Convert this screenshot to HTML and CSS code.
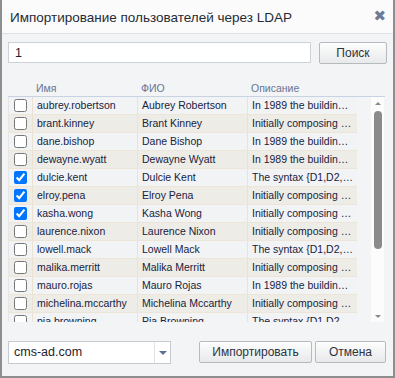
FILE: index.html
```html
<!DOCTYPE html>
<html lang="ru">
<head>
<meta charset="utf-8">
<title>Импорт LDAP</title>
<link rel="stylesheet" href="styles.css">
</head>
<body>
<div class="dialog">
  <div class="titlebar">
    <span class="title">Импортирование пользователей через LDAP</span>
    <span class="close">✖</span>
  </div>
  <div class="content">
    <div class="search">
      <input class="search-input" type="text" value="1">
      <button class="btn btn-search">Поиск</button>
    </div>
    <div class="grid">
      <div class="grid-head">
        <div class="hcell c-check"></div>
        <div class="hcell c-name">Имя</div>
        <div class="hcell c-fio">ФИО</div>
        <div class="hcell c-desc">Описание</div>
      </div>
      <div class="grid-body">
        <div class="rows">
          <table class="table">
            <colgroup><col class="w-check"><col class="w-name"><col class="w-fio"><col class="w-desc"></colgroup>
            <tbody>
              <tr><td class="cb"><input type="checkbox"></td><td>aubrey.robertson</td><td>Aubrey Robertson</td><td>In 1989 the building was restored</td></tr>
              <tr><td class="cb"><input type="checkbox"></td><td>brant.kinney</td><td>Brant Kinney</td><td>Initially composing light-hearted</td></tr>
              <tr><td class="cb"><input type="checkbox"></td><td>dane.bishop</td><td>Dane Bishop</td><td>In 1989 the building was restored</td></tr>
              <tr><td class="cb"><input type="checkbox"></td><td>dewayne.wyatt</td><td>Dewayne Wyatt</td><td>In 1989 the building was restored</td></tr>
              <tr><td class="cb"><input type="checkbox" checked></td><td>dulcie.kent</td><td>Dulcie Kent</td><td>The syntax {D1,D2,D3} denotes</td></tr>
              <tr><td class="cb"><input type="checkbox" checked></td><td>elroy.pena</td><td>Elroy Pena</td><td>Initially composing light-hearted</td></tr>
              <tr><td class="cb"><input type="checkbox" checked></td><td>kasha.wong</td><td>Kasha Wong</td><td>Initially composing light-hearted</td></tr>
              <tr><td class="cb"><input type="checkbox"></td><td>laurence.nixon</td><td>Laurence Nixon</td><td>Initially composing light-hearted</td></tr>
              <tr><td class="cb"><input type="checkbox"></td><td>lowell.mack</td><td>Lowell Mack</td><td>The syntax {D1,D2,D3} denotes</td></tr>
              <tr><td class="cb"><input type="checkbox"></td><td>malika.merritt</td><td>Malika Merritt</td><td>Initially composing light-hearted</td></tr>
              <tr><td class="cb"><input type="checkbox"></td><td>mauro.rojas</td><td>Mauro Rojas</td><td>In 1989 the building was restored</td></tr>
              <tr><td class="cb"><input type="checkbox"></td><td>michelina.mccarthy</td><td>Michelina Mccarthy</td><td>Initially composing light-hearted</td></tr>
              <tr><td class="cb"><input type="checkbox"></td><td>pia.browning</td><td>Pia Browning</td><td>The syntax {D1,D2,D3} denotes</td></tr>
            </tbody>
          </table>
        </div>
        <div class="scrollbar">
          <span class="arrow arrow-up"></span>
          <span class="thumb"></span>
          <span class="arrow arrow-down"></span>
        </div>
      </div>
    </div>
    <div class="footer">
      <div class="select">
        <span class="select-value">cms-ad.com</span>
        <span class="select-toggle"><span class="tri"></span></span>
      </div>
      <div class="actions">
        <button class="btn btn-import">Импортировать</button>
        <button class="btn btn-cancel">Отмена</button>
      </div>
    </div>
  </div>
</div>
</body>
</html>
```
FILE: styles.css
```css
html, body {
  margin: 0;
  padding: 0;
  background: #ffffff;
}
body {
  font-family: "Liberation Sans", Arial, sans-serif;
}
.dialog {
  width: 395px;
  height: 378px;
  box-sizing: border-box;
  border: 2px solid #8e8e8e;
  border-top: 0;
  background: #f3f4f6;
  display: flex;
  flex-direction: column;
}
.titlebar {
  flex: none;
  height: 33px;
  background: #fbfbfc;
  border-bottom: 1px solid #dce1e9;
  display: flex;
  align-items: center;
  justify-content: space-between;
  padding: 0 7px 0 8px;
}
.title {
  font-size: 13.5px;
  color: #262b36;
  padding-top: 2px;
}
.close {
  color: #6a7a97;
  font-size: 15px;
  line-height: 1;
  font-family: "DejaVu Sans", sans-serif;
}
.content {
  flex: 1;
  display: flex;
  flex-direction: column;
  padding: 8px 6px 0 6px;
  min-height: 0;
}
.search {
  display: flex;
  align-items: flex-start;
  gap: 8px;
}
.search-input {
  width: 303px;
  height: 21px;
  box-sizing: border-box;
  border: 1px solid #cdd2d9;
  background: #ffffff;
  padding: 0 6px;
  margin: 0;
  font-family: "Liberation Sans", Arial, sans-serif;
  font-size: 12.5px;
  color: #1c2030;
  outline: none;
}
.btn {
  box-sizing: border-box;
  height: 22px;
  margin: 0;
  padding: 0;
  border: 1px solid #b6babf;
  border-radius: 2px;
  background: linear-gradient(#fdfdfd, #e8e9eb);
  font-family: "Liberation Sans", Arial, sans-serif;
  font-size: 12px;
  color: #2d3340;
  box-shadow: inset 0 1px 0 #ffffff;
}
.btn-search {
  width: 68px;
}
.grid {
  margin-top: 13px;
  width: 377px;
}
.grid-head {
  display: flex;
  height: 20px;
  border-bottom: 1px solid #c7d2e3;
  align-items: flex-end;
  padding-bottom: 2px;
  box-sizing: border-box;
}
.hcell {
  font-size: 10.5px;
  line-height: 12px;
  color: #667594;
  box-sizing: border-box;
  padding-left: 4px;
}
.c-check { width: 24px; padding: 0; }
.c-name { width: 105px; }
.c-fio { width: 110px; }
.c-desc { width: 110px; }
.grid-body {
  display: flex;
  height: 225px;
  overflow: hidden;
}
.rows {
  width: 349px;
  overflow: hidden;
}
.table {
  width: 349px;
  table-layout: fixed;
  border-collapse: collapse;
  font-size: 10.5px;
  color: #17223f;
}
.w-check { width: 24px; }
.w-name { width: 105px; }
.w-fio { width: 110px; }
.w-desc { width: 110px; }
.table td {
  height: 17px;
  padding: 0 4px;
  box-sizing: border-box;
  border-left: 1px solid #ebe2d2;
  border-bottom: 1px solid #ece5d8;
  white-space: nowrap;
  overflow: hidden;
  text-overflow: ellipsis;
  line-height: 17px;
}
.table tr:nth-child(odd) td {
  background: #f2f3f5;
}
.table tr:nth-child(even) td {
  background: #eeece6;
}
.table td.cb {
  padding: 0;
  text-align: center;
  border-left: 1px solid #e6e6e6;
}
.table td.cb input {
  margin: 0;
  width: 13px;
  height: 13px;
  vertical-align: middle;
  position: relative;
  top: -1px;
}
.scrollbar {
  margin-left: 14px;
  width: 13px;
  background: #fcfcfc;
  display: flex;
  flex-direction: column;
  align-items: center;
  padding: 5px 0 4px;
  box-sizing: border-box;
}
.arrow {
  width: 0;
  height: 0;
  border-left: 3px solid transparent;
  border-right: 3px solid transparent;
}
.arrow-up {
  border-bottom: 3px solid #8a8a8a;
}
.arrow-down {
  margin-top: auto;
  border-top: 3px solid #8a8a8a;
}
.thumb {
  margin-top: 6px;
  width: 8px;
  height: 138px;
  border-radius: 4px;
  background: #8b8b8b;
}
.footer {
  margin-top: 19px;
  display: flex;
  justify-content: space-between;
  align-items: flex-start;
}
.select {
  width: 163px;
  height: 23px;
  box-sizing: border-box;
  border: 1px solid #c7cbd1;
  background: #ffffff;
  display: flex;
  align-items: stretch;
}
.select-value {
  flex: 1;
  font-size: 12.5px;
  color: #1f232b;
  padding-left: 5px;
  line-height: 21px;
}
.select-toggle {
  width: 15px;
  border-left: 1px solid #e0e3e8;
  display: flex;
  align-items: center;
  justify-content: center;
}
.tri {
  width: 0;
  height: 0;
  border-left: 4px solid transparent;
  border-right: 4px solid transparent;
  border-top: 4px solid #5d7096;
}
.actions {
  display: flex;
  gap: 3px;
  margin-right: 1px;
}
.btn-import {
  width: 113px;
}
.btn-cancel {
  width: 71px;
}
```
